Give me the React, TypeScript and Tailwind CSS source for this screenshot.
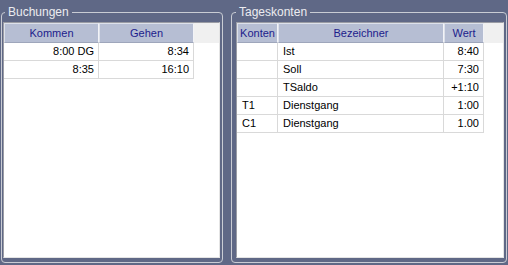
const font = { fontFamily: '"Liberation Sans", Arial, sans-serif' };

type Col = { title: string; w: string; align: "left" | "right" };

function Grid({ cols, rows, className }: { cols: Col[]; rows: string[][]; className: string }) {
  return (
    <div
      className={`flex flex-col h-[236px] bg-white border border-l-[#9a9ca4] border-t-[#9a9ca4] border-r-[#e4e4e4] border-b-[#e4e4e4] ${className}`}
    >
      {/* Header */}
      <div className="flex h-[20px] shrink-0 bg-[#f0f0f0]">
        {cols.map((c) => (
          <div
            key={c.title}
            className={`${c.w} shrink-0 flex items-center justify-center bg-[#b6bed3] text-[#1c1c8c] border-r border-b border-r-[#f2f3f7] border-b-[#9ea6bb] border-t border-l border-t-[#dde1ea] border-l-[#dde1ea]`}
          >
            {c.title}
          </div>
        ))}
      </div>
      {/* Rows */}
      {rows.map((r, i) => (
        <div key={i} className="flex h-[18px] shrink-0">
          {r.map((v, j) => (
            <div
              key={j}
              className={`${cols[j].w} shrink-0 flex items-center border-r border-b border-[#d9d9d9] ${
                cols[j].align === "right" ? "justify-end pr-[4px]" : "pl-[5px]"
              }`}
            >
              {v}
            </div>
          ))}
        </div>
      ))}
    </div>
  );
}

export default function App() {
  return (
    <div
      className="w-[508px] h-[265px] bg-[#5f6886] flex gap-[8px] pl-[1px] pt-[6px] text-[11px] leading-[13px] text-black"
      style={font}
    >
      {/* Buchungen */}
      <fieldset className="w-[222px] h-[257px] shrink-0 border border-[#c9ccd4] rounded-[4px] pl-[1px] pr-[2px] pt-[3px] pb-[4px]">
        <legend className="ml-[2px] px-[3px] text-[#ececf0] text-[12px] leading-[13px]">Buchungen</legend>
        <Grid
          className="w-[217px]"
          cols={[
            { title: "Kommen", w: "w-[95px]", align: "right" },
            { title: "Gehen", w: "w-[95px]", align: "right" },
          ]}
          rows={[
            ["8:00 DG", "8:34"],
            ["8:35", "16:10"],
          ]}
        />
      </fieldset>

      {/* Tageskonten */}
      <fieldset className="w-[276px] h-[257px] shrink-0 border border-[#c9ccd4] rounded-[4px] pl-[4px] pr-[2px] pt-[3px] pb-[4px]">
        <legend className="ml-0 px-[3px] text-[#ececf0] text-[12px] leading-[13px]">Tageskonten</legend>
        <Grid
          className="w-[268px]"
          cols={[
            { title: "Konten", w: "w-[41px]", align: "left" },
            { title: "Bezeichner", w: "w-[166px]", align: "left" },
            { title: "Wert", w: "w-[40px]", align: "right" },
          ]}
          rows={[
            ["", "Ist", "8:40"],
            ["", "Soll", "7:30"],
            ["", "TSaldo", "+1:10"],
            ["T1", "Dienstgang", "1:00"],
            ["C1", "Dienstgang", "1.00"],
          ]}
        />
      </fieldset>
    </div>
  );
}
